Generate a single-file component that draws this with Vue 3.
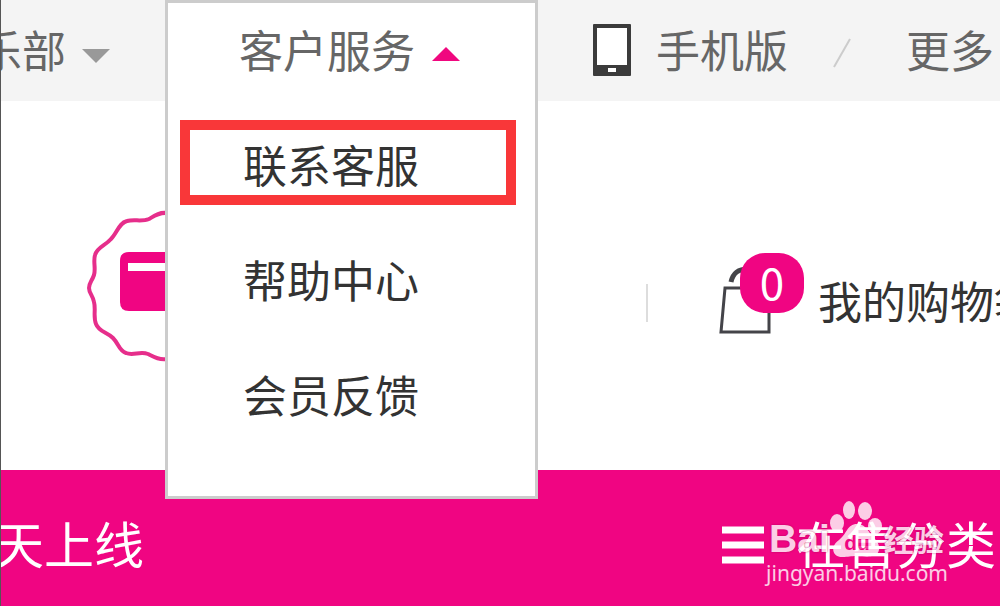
<script setup>
const menu = [
  { label: '联系客服', active: true },
  { label: '帮助中心', active: false },
  { label: '会员反馈', active: false },
]
</script>

<template>
  <div class="page">
    <header class="topbar">
      <div class="club">
        <button type="button" class="plain">俱乐部</button>
        <svg class="caret" viewBox="0 0 28 14" aria-hidden="true"><path d="M0 0H28L14 14Z" fill="#999" /></svg>
      </div>
      <div class="service">
        <div class="dropdown">
          <button type="button" class="plain trigger" aria-expanded="true">
            客户服务
            <svg class="caret" viewBox="0 0 28 14" aria-hidden="true"><path d="M0 14H28L14 0Z" fill="#f0087f" /></svg>
          </button>
          <ul class="menu">
            <li v-for="item in menu" :key="item.label">
              <a href="#" :class="{ active: item.active }">{{ item.label }}</a>
            </li>
          </ul>
        </div>
      </div>
      <nav class="links">
        <a href="#" class="mobile">
          <svg class="phone" viewBox="0 0 38 52" aria-hidden="true">
            <rect width="38" height="52" rx="1" fill="#3b3b3b" />
            <rect x="4" y="4" width="30" height="37" fill="#fff" />
            <rect x="15" y="44" width="8" height="4" fill="#fff" />
          </svg>
          手机版
        </a>
        <svg class="slash" viewBox="0 0 20 32" aria-hidden="true"><path d="M2 30L18 2" stroke="#ccc" stroke-width="2" /></svg>
        <a href="#">更多</a>
      </nav>
    </header>

    <main class="middle">
      <div class="emblem">
        <svg class="seal" viewBox="0 0 150 152" aria-hidden="true">
          <path d="M80 3C72 2 67 6 62 9C55 12 47 9 40 11C32 13 30 23 24 29C18 36 10 37 8 45C6 52 9 58 7 65C5 71 2 73 2 78C2 83 6 86 7 92C9 99 6 107 9 114C12 122 20 122 26 128C32 134 32 141 39 143C46 146 53 141 61 144C67 147 72 150 80 149" fill="none" stroke="#e62e8b" stroke-width="4" />
          <path d="M42 42H90V101H42Q33 101 33 92V51Q33 42 42 42Z" fill="#f00582" />
          <rect x="41" y="53" width="50" height="8" fill="#fff" />
        </svg>
      </div>
      <a href="#" class="cart">
        <span class="bag-box">
          <svg class="bag" viewBox="0 0 54 74" aria-hidden="true">
            <path d="M6 27H50V71H2Z" fill="#fff" stroke="#444449" stroke-width="3" />
            <path d="M12 21C14 12 19 8 29 8" fill="none" stroke="#444449" stroke-width="5" />
          </svg>
          <span class="count">0</span>
        </span>
        <span class="cart-label">我的购物袋</span>
      </a>
    </main>

    <nav class="mainnav">
      <a href="#" class="online">天上线</a>
      <a href="#" class="category">
        <svg class="bars" viewBox="0 0 42 38" aria-hidden="true">
          <path d="M0 4H42M0 19H42M0 34H42" stroke="#fff" stroke-width="7" />
        </svg>
        在售分类
      </a>
      <div class="watermark">
        <div class="brand">
          <span class="bai">Bai</span>
          <svg class="paw" viewBox="0 0 54 58" aria-hidden="true">
            <g fill="#fff">
              <ellipse cx="7" cy="23" rx="7" ry="9" />
              <ellipse cx="19" cy="10" rx="6" ry="9" />
              <ellipse cx="35" cy="11" rx="7" ry="9" />
              <ellipse cx="45" cy="26" rx="7" ry="8" />
              <path d="M27 24C17 24 17 34 9 40C0 46 2 57 12 57C19 57 20 56 27 56C34 56 35 57 42 56C51 55 51 45 45 39C38 33 37 24 27 24Z" />
            </g>
            <text x="27" y="50" text-anchor="middle" class="du">du</text>
          </svg>
          <span class="jingyan">经验</span>
        </div>
        <div class="site">jingyan.baidu.com</div>
      </div>
    </nav>
  </div>
</template>

<style>
body { margin: 0; background: #fff; }
</style>

<style scoped>
* { box-sizing: border-box; }
.page {
  display: grid;
  grid-template-rows: 101px 369px 1fr;
  min-height: 100vh;
  overflow: hidden;
  border-left: 1px solid #555;
  font-family: "Liberation Sans", "Noto Sans CJK SC", sans-serif;
  font-size: 44px;
  line-height: 64px;
  white-space: nowrap;
  color: #333;
}
a { color: inherit; text-decoration: none; }
svg { display: block; flex: none; }
.plain { border: 0; padding: 0; background: none; font: inherit; color: inherit; }
.topbar {
  display: grid;
  grid-template-columns: 164px 373px minmax(0, 1fr);
  background: #f4f4f4;
  color: #666;
}
.club {
  display: flex;
  align-items: center;
  justify-content: flex-end;
  gap: 16px;
  padding-right: 55px;
  height: 106px;
}
.caret { width: 28px; height: 14px; margin-top: 6px; }
.service { position: relative; }
.dropdown {
  position: absolute;
  z-index: 2;
  top: 0;
  left: 0;
  width: 100%;
  padding-bottom: 46px;
  border: 3px solid #ccc;
  background: #fff;
}
.trigger {
  display: flex;
  align-items: center;
  gap: 17px;
  width: 100%;
  height: 100px;
  padding-left: 71px;
}
.trigger .caret { margin-top: 2px; }
.menu { list-style: none; margin: 0; padding: 2px 0 0; color: #333; }
.menu li { display: flex; align-items: center; height: 115px; padding: 0 19px 0 12px; }
.menu a {
  flex: 1;
  height: 85px;
  padding: 6px 0 0 53px;
  border: 10px solid transparent;
}
.menu .active { border-color: #f93739; }
.links {
  display: flex;
  align-items: center;
  gap: 44px;
  height: 106px;
  padding-left: 55px;
}
.mobile { display: flex; align-items: center; gap: 25px; }
.phone { width: 38px; height: 52px; margin-bottom: 6px; }
.slash { width: 20px; height: 32px; }
.links > a:last-child { margin-left: 10px; }
.middle { display: flex; justify-content: space-between; align-items: center; background: #fff; }
.emblem { padding-left: 86px; }
.seal { width: 150px; height: 152px; }
.cart {
  display: flex;
  align-items: center;
  width: 354px;
  margin-top: 34px;
}
.cart::before { content: ""; flex: none; width: 2px; height: 38px; margin-right: 71px; background: #ddd; }
.bag-box { position: relative; flex: none; width: 54px; margin: 0 45px 10px 0; }
.bag { width: 54px; height: 74px; }
.cart-label { padding-top: 2px; }
.count {
  position: absolute;
  top: -8px;
  left: 21px;
  width: 64px;
  height: 60px;
  border-radius: 25px;
  background: #f00582;
  color: #fff;
  font-family: "Noto Sans CJK SC", sans-serif;
  line-height: 56px;
  text-align: center;
}
.mainnav {
  position: relative;
  display: flex;
  justify-content: space-between;
  align-items: center;
  height: 100%;
  padding-top: 18px;
  background: #f00582;
  color: #fff;
  font-size: 50px;
}
.online { margin-left: -7px; }
.category { display: flex; align-items: center; gap: 32px; padding-right: 4px; }
.bars { width: 42px; height: 38px; margin-bottom: 4px; }
.watermark {
  position: absolute;
  right: 52px;
  bottom: 18px;
  color: #fff;
  opacity: 0.8;
}
.brand { display: flex; align-items: flex-end; height: 58px; padding-left: 3px; text-shadow: 0 0 2px #a50059; }
.bai { font-size: 39px; font-weight: 700; line-height: 38px; }
.paw { width: 54px; height: 58px; }
.du { font-size: 21px; font-weight: 700; fill: #f00582; text-shadow: none; }
.jingyan { font-size: 30px; font-weight: 700; line-height: 34px; }
.site { font-family: "Noto Sans", sans-serif; font-size: 21px; line-height: 30px; }
</style>
